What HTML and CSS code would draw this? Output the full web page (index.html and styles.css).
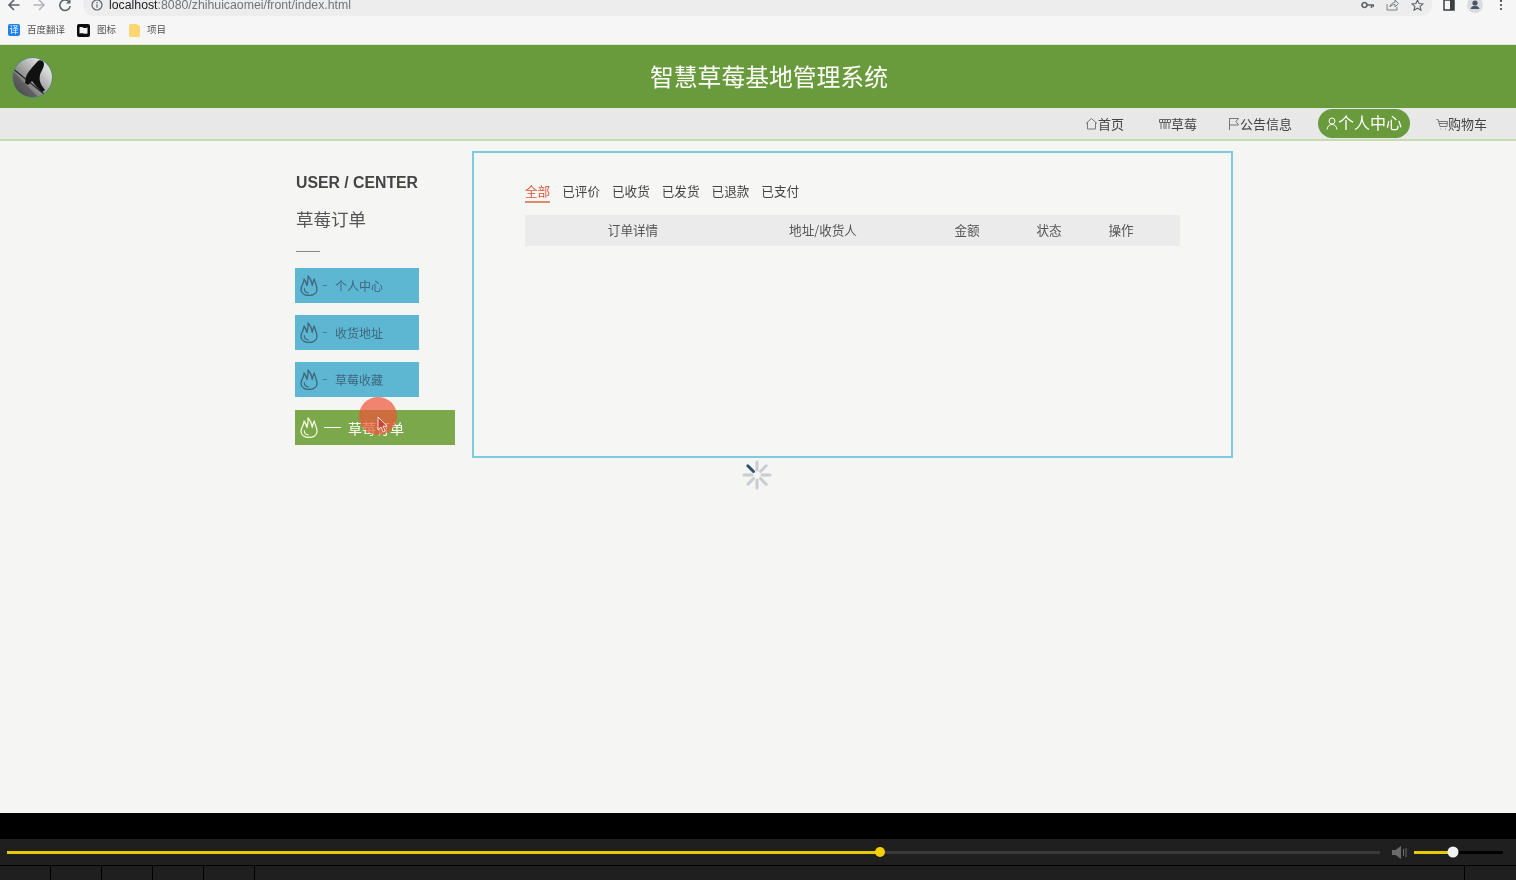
FILE: index.html
```html
<!DOCTYPE html>
<html lang="zh-CN">
<head>
<meta charset="utf-8">
<title>智慧草莓基地管理系统</title>
<link rel="stylesheet" href="styles.css">
</head>
<body>
<svg class="defs" width="0" height="0" aria-hidden="true">
  <symbol id="flame" viewBox="0 0 18 21">
    <path d="M4 4C4.300 8 1 10 1 14.500 1 18.500 5 20.500 9 20.500S17 18.500 17 14.500C17 10.500 15 8 14.300 4 13.300 6 12.600 8 12.200 10.500 11.700 7 10 3 8 1 8.200 4 7.800 7.500 7 10.500 6.500 8.300 5.500 6 4 4Z" fill="none" stroke="currentColor" stroke-width="1.300" stroke-linejoin="round"/>
    <path d="M4.300 13.500C4.300 16 6 17.800 8.500 18" fill="none" stroke="currentColor" stroke-width="1.100" stroke-linecap="round"/>
  </symbol>
</svg>

<div class="chrome">
  <div class="toolbar">
    <svg class="tb-ic" width="14" height="14" viewBox="0 0 14 14"><path d="M12.500 7H2M7 2 2 7l5 5" fill="none" stroke="#5f6368" stroke-width="1.600"/></svg>
    <svg class="tb-ic" width="14" height="14" viewBox="0 0 14 14"><path d="M1.500 7H12M7 2l5 5-5 5" fill="none" stroke="#b4b6b9" stroke-width="1.600"/></svg>
    <svg class="tb-ic" width="14" height="14" viewBox="0 0 14 14"><path d="M11.500 4.500A5.200 5.200 0 1 0 12.200 8" fill="none" stroke="#5f6368" stroke-width="1.600"/><path d="M12.500 1v4.500H8z" fill="#5f6368"/></svg>
    <div class="omnibox">
      <svg class="info" width="12" height="12" viewBox="0 0 12 12"><circle cx="6" cy="6" r="5" fill="none" stroke="#5f6368" stroke-width="1.200"/><path d="M6 5.200v3.500M6 3v1.200" stroke="#5f6368" stroke-width="1.200"/></svg>
      <span class="url"><b>localhost</b>:8080/zhihuicaomei/front/index.html</span>
      <span class="omni-icons">
        <svg width="13" height="8" viewBox="0 0 13 8"><circle cx="3.500" cy="4" r="2.500" fill="none" stroke="#5f6368" stroke-width="1.700"/><path d="M6 4h7M10.500 4v3M12.500 4v2" stroke="#5f6368" stroke-width="1.500"/></svg>
        <svg width="13" height="12" viewBox="0 0 13 12"><path d="M1 5v6h10V8M4 8c0-3 3-4.500 5-4.500V1l3.500 3.500L9 8V5.500C7 5.500 5 6.300 4 8Z" fill="none" stroke="#7b7e82" stroke-width="1"/></svg>
        <svg width="13" height="12" viewBox="0 0 13 12"><path d="m6.500 1 1.600 3.500 3.900.4-2.900 2.500.9 3.800-3.500-2-3.500 2 .9-3.800L1 4.900l3.900-.4Z" fill="none" stroke="#5f6368" stroke-width="1.100"/></svg>
      </span>
    </div>
    <div class="tb-right">
      <svg class="tb-panel" width="12" height="12" viewBox="0 0 12 12"><path d="M1 1h10v10H1z" fill="none" stroke="#3c4043" stroke-width="1.500"/><path d="M7 1h4v10H7z" fill="#3c4043"/></svg>
      <svg class="avatar" width="16" height="16" viewBox="0 0 16 16"><circle cx="8" cy="8" r="8" fill="#dadce0"/><circle cx="8" cy="6" r="2.600" fill="#4a5568"/><path d="M3.500 12c.5-2.500 2.500-3 4.500-3s4 .5 4.500 3z" fill="#4a5568"/></svg>
      <svg width="4" height="12" viewBox="0 0 4 12"><circle cx="2" cy="2" r="1.100" fill="#444"/><circle cx="2" cy="6" r="1.100" fill="#444"/><circle cx="2" cy="10" r="1.100" fill="#444"/></svg>
    </div>
  </div>
  <div class="bookmarks">
    <span class="bm bm-1"><i class="bm-fan">译</i>百度翻译</span>
    <span class="bm bm-2"><svg width="13" height="13" viewBox="0 0 13 13"><rect width="13" height="13" rx="2" fill="#0c0c0c"/><path d="M2.500 3.500c2-1 3 0 4 .3s2 .3 4-.3v6c-2 .6-3 .3-4 0s-2-.6-4 0Z" fill="#f2f2f2"/></svg>图标</span>
    <span class="bm"><svg width="11" height="13" viewBox="0 0 11 13"><path d="M0 1.500A1.500 1.500 0 0 1 1.500 0H7l4 2v9.500a1.500 1.500 0 0 1-1.500 1.500h-8A1.500 1.500 0 0 1 0 11.500Z" fill="#fbd774"/></svg>项目</span>
  </div>
</div>

<header class="site-head">
  <svg class="logo" width="41" height="41" viewBox="0 0 41 41">
    <defs>
      <linearGradient id="lg" x1="0" y1="1" x2="1" y2="0"><stop offset="0" stop-color="#3c3c3c"/><stop offset=".4" stop-color="#8f8f8f"/><stop offset=".75" stop-color="#d8d8d8"/><stop offset="1" stop-color="#f0f0f0"/></linearGradient>
      <clipPath id="lc"><circle cx="20.500" cy="20.500" r="19.500"/></clipPath>
    </defs>
    <circle cx="20.500" cy="20.500" r="20.300" fill="#4f8a6e"/>
    <g clip-path="url(#lc)">
      <rect width="41" height="41" fill="url(#lg)"/>
      <path d="M0 11 32 37" stroke="#222" stroke-width="1.200"/>
      <path d="M0 13 27 41H0Z" fill="#3f3f3f" opacity=".45"/>
      <path d="M25 5C27 2 32 3 32 7 32 11 29 14 28 18 27 22 28 26 30 29L33 33 30 35 24 29 20 24 16 28 13 26 14 20C16 14 21 10 25 5Z" fill="#111"/>
    </g>
  </svg>
  <h1 class="site-title">智慧草莓基地管理系统</h1>
</header>

<nav class="site-nav">
  <a class="nav-item nav-home"><svg width="13" height="13" viewBox="0 0 13 13"><path d="M1 6.500 6.500 1.500 12 6.500M2.500 5.500V12h8V5.500" fill="none" stroke="#777" stroke-width="1"/></svg>首页</a>
  <a class="nav-item nav-berry"><svg width="12" height="12" viewBox="0 0 12 12"><path d="M.5 1.500h11v3H.5zM2 4.500V11M5 4.500V11M7 4.500V11M10 4.500V11M3.500 1.500v3M6 1.500v3M8.500 1.500v3" fill="none" stroke="#666" stroke-width="1"/></svg>草莓</a>
  <a class="nav-item nav-news"><svg width="12" height="13" viewBox="0 0 12 13"><path d="M1.500 1v12M1.500 1.500h9L8 4.500l2.500 3.500h-9" fill="none" stroke="#777" stroke-width="1"/></svg>公告信息</a>
  <a class="nav-item nav-active"><svg width="12" height="13" viewBox="0 0 12 13"><circle cx="6" cy="4" r="3" fill="none" stroke="#fff" stroke-width="1"/><path d="M1 12.500C1.500 9 3.500 7.500 6 7.500s4.500 1.500 5 5" fill="none" stroke="#fff" stroke-width="1"/></svg><span class="nav-label">个人中心</span></a>
  <a class="nav-item nav-cart"><svg width="12" height="12" viewBox="0 0 12 12"><path d="M.5 1.500H2L4 8.500h7l.5-5H3M4.500 11h.8M9 11h.8M3 5.500h8" fill="none" stroke="#777" stroke-width="1"/></svg>购物车</a>
</nav>

<main class="content">
  <aside class="side">
    <div class="side-en">USER / CENTER</div>
    <div class="side-cn">草莓订单</div>
    <div class="side-rule"></div>
    <ul class="menu">
      <li class="menu-item"><svg class="flame" width="18" height="21"><use href="#flame"/></svg><span class="dash"></span>个人中心</li>
      <li class="menu-item"><svg class="flame" width="18" height="21"><use href="#flame"/></svg><span class="dash"></span>收货地址</li>
      <li class="menu-item"><svg class="flame" width="18" height="21"><use href="#flame"/></svg><span class="dash"></span>草莓收藏</li>
      <li class="menu-item menu-active"><svg class="flame" width="18" height="21"><use href="#flame"/></svg><span class="dash"></span>草莓订单</li>
    </ul>
  </aside>
  <section class="panel">
    <div class="tabs">
      <span class="tab tab-on">全部</span>
      <span class="tab">已评价</span>
      <span class="tab">已收货</span>
      <span class="tab">已发货</span>
      <span class="tab">已退款</span>
      <span class="tab">已支付</span>
    </div>
    <div class="thead">
      <span>订单详情</span>
      <span>地址/收货人</span>
      <span>金额</span>
      <span>状态</span>
      <span>操作</span>
    </div>
  </section>

  <div class="click-dot"></div>
  <svg class="cursor" width="12" height="17" viewBox="0 0 12 17"><path d="M1 1v13l3-3 2.200 5 2-1-2.200-4.800H10Z" fill="#c9453a" stroke="#fff" stroke-width=".8"/></svg>
  <svg class="spinner" width="30" height="30" viewBox="0 0 30 30" stroke-width="3" stroke-linecap="round">
    <g stroke="#c8cdd2">
      <path d="M15 2v8M15 20v8M2 15h8M20 15h8M24.200 5.800l-5.700 5.700M5.800 24.200l5.700-5.700M24.200 24.200l-5.700-5.700"/>
    </g>
    <path d="M5.800 5.800l5.700 5.700" stroke="#2e5270"/>
  </svg>
</main>

<footer class="player">
  <div class="player-gap"></div>
  <div class="player-bar">
    <div class="seek"><div class="seek-fill"></div><span class="knob knob-y"></span></div>
    <svg class="vol-ic" width="16" height="13" viewBox="0 0 16 13"><path d="M0 4h3.500L9 0v13L3.500 9H0Z" fill="#6a6a6a"/><path d="M11.500 3v7M14 2v9" stroke="#6a6a6a" stroke-width="1"/></svg>
    <div class="vol"><div class="vol-fill"></div><span class="knob knob-w"></span></div>
  </div>
  <div class="player-cells">
    <span class="cell"></span><span class="cell"></span><span class="cell"></span><span class="cell"></span><span class="cell"></span>
    <span class="cell-wide"></span>
  </div>
</footer>
</body>
</html>
```

FILE: styles.css
```css
* { box-sizing: border-box; }
html, body { height: 100%; }
body {
  margin: 0;
  height: 880px;
  overflow: hidden;
  display: flex;
  flex-direction: column;
  background: #f5f5f4;
  font-family: "Noto Sans CJK SC", "Liberation Sans", sans-serif;
  color: #444;
}
.defs { position: absolute; }
.chrome, .site-head, .site-nav, .content { filter: blur(.35px); }

/* browser chrome */
.chrome { height: 45px; flex: none; background: #f6f6f6; border-bottom: 1px solid #dfe3d8; }
.toolbar {
  height: 16px;
  overflow: hidden;
  display: flex;
  align-items: flex-end;
  padding-left: 7px;
}
.tb-ic { flex: none; margin-right: 11px; margin-bottom: 4px; }
.tb-ic:nth-child(2) { margin-right: 12px; }
.omnibox {
  width: 1349px;
  height: 22px;
  flex: none;
  background: #ededed;
  border-radius: 0 0 11px 11px;
  display: flex;
  align-items: center;
  padding: 0 8px;
}
.info { flex: none; margin-right: 6px; }
.url { font: 12.300px "Liberation Sans", sans-serif; color: #70757a; white-space: nowrap; }
.url b { font-weight: 400; color: #202124; }
.omni-icons { margin-left: auto; display: flex; align-items: center; gap: 12px; }
.tb-right { display: flex; align-items: center; margin-left: 11px; height: 22px; }
.tb-panel { margin-right: 12px; }
.avatar { margin-right: 16px; }
.bookmarks {
  height: 28px;
  display: flex;
  align-items: center;
  padding-left: 8px;
  font-size: 9.500px;
  color: #555;
}
.bm { display: flex; align-items: center; gap: 7px; line-height: 1; }
.bm-1 { margin-right: 12px; }
.bm-2 { margin-right: 13px; }
.bm-fan {
  width: 12px; height: 12px;
  border-radius: 2px;
  background: #1f80f0;
  color: #fff;
  font-style: normal;
  font-size: 9px;
  line-height: 12px;
  text-align: center;
}

/* site header */
.site-head {
  height: 63px;
  flex: none;
  background: #699a3b;
  display: flex;
  align-items: center;
  padding-left: 12px;
}
.logo { flex: none; margin-top: 1px; }
.site-title {
  margin: -2px 0 0 597px;
  font-size: 23.800px;
  font-weight: 400;
  line-height: 1;
  color: #fff;
  white-space: nowrap;
}

/* nav */
.site-nav {
  height: 33px;
  flex: none;
  background: #e8e8e8;
  border-bottom: 2px solid #c6dcae;
  display: flex;
  align-items: center;
  justify-content: flex-end;
  padding-right: 29px;
  font-size: 13px;
  color: #444;
}
.nav-item { display: flex; align-items: center; white-space: nowrap; line-height: 1; }
.nav-home { margin-right: 35px; }
.nav-berry { margin-right: 31px; }
.nav-news { margin-right: 26px; }
.nav-active {
  height: 29px;
  width: 92px;
  padding-left: 8px;
  margin-right: 26px;
  margin-top: -1px;
  border-radius: 15px;
  background: #699a3b;
  color: #fff;
  font-size: 16px;
}
.nav-label { margin-top: -2px; }

/* main */
.content {
  flex: 1;
  position: relative;
  display: flex;
  align-items: flex-start;
  padding: 10px 0 0 295px;
}
.side { width: 177px; flex: none; }
.side-en {
  margin-top: 21px;
  font: 700 15.800px/22px "Liberation Sans", sans-serif;
  color: #444;
  padding-left: 1px;
}
.side-cn { margin-top: 12px; font-size: 17.500px; line-height: 26px; color: #555; padding-left: 1px; }
.side-rule { width: 24px; height: 1px; background: #888; margin: 19px 0 16px 1px; }
.menu { list-style: none; margin: 0; padding: 0; display: flex; flex-direction: column; gap: 12px; align-items: flex-start; }
.menu-item {
  width: 124px;
  height: 35px;
  background: #5db7d3;
  color: #3f667c;
  font-size: 12px;
  display: flex;
  align-items: center;
  padding-left: 5px;
}
.flame { flex: none; margin-right: 5px; }
.dash { width: 4px; height: 1px; background: currentColor; margin-right: 8px; flex: none; opacity: .7; }
.menu-active { width: 160px; margin-top: 1px; background: #7ba84a; color: #fff; font-size: 14px; }
.menu-active .flame { color: #f2f6dc; margin-right: 6px; }
.menu-active .dash { width: 17px; margin-right: 7px; opacity: 1; }
.panel {
  width: 761px;
  height: 307px;
  flex: none;
  border: 2px solid #7fcbdd;
  background: #f6f6f5;
  padding: 28px 51px 0;
}
.tabs { display: flex; gap: 12px; font-size: 12.600px; color: #444; }
.tab { line-height: 20px; height: 22px; white-space: nowrap; }
.tab-on { color: #d9583a; border-bottom: 2px solid #dc8a70; }
.thead {
  margin-top: 12px;
  width: 655px;
  height: 31px;
  padding-bottom: 2px;
  background: #ebebeb;
  display: grid;
  grid-template-columns: 216px 164px 124px 40px 104px;
  align-items: center;
  text-align: center;
  font-size: 12.600px;
  color: #555;
}
.thead span { white-space: nowrap; justify-self: center; }

/* overlays */
.click-dot {
  position: absolute;
  left: 359px;
  top: 256px;
  width: 38px;
  height: 38px;
  border-radius: 50%;
  background: rgba(238, 84, 56, .7);
}
.cursor { position: absolute; left: 377px; top: 275px; }
.spinner { position: absolute; left: 742px; top: 319px; }

/* player */
.player { flex: none; height: 67px; background: #000; }
.player-gap { height: 26px; }
.player-bar {
  height: 26px;
  background: #1f1f1f;
  display: flex;
  align-items: center;
  padding: 0 13px 0 7px;
}
.seek { width: 1373px; height: 3px; flex: none; background: #3a3a3a; position: relative; }
.seek-fill { width: 873px; height: 3px; background: #e6cb00; }
.knob { position: absolute; top: 50%; border-radius: 50%; transform: translate(-50%, -50%); }
.knob-y { left: 873px; width: 10px; height: 10px; background: #f5d000; }
.vol-ic { flex: none; margin-left: 12px; margin-right: 6px; }
.vol { width: 89px; height: 3px; flex: none; background: #000; position: relative; }
.vol-fill { width: 39px; height: 3px; background: #e6cb00; }
.knob-w { left: 39px; width: 11px; height: 11px; background: #f2f2f2; }
.player-cells {
  height: 15px;
  border-top: 1px solid #000;
  display: flex;
  background: #1f1f1f;
}
.cell { width: 51px; flex: none; border-right: 1px solid #000; }
.cell-wide { width: 1210px; flex: none; border-right: 1px solid #000; }
```
